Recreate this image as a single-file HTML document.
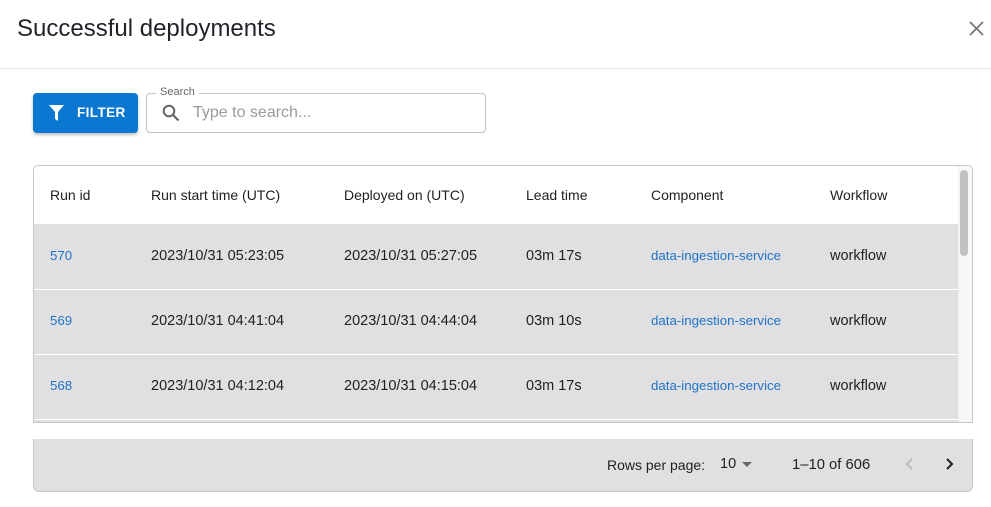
<!DOCTYPE html>
<html><head><style>
*{box-sizing:border-box;margin:0;padding:0}
body{width:991px;height:507px;background:#fff;font-family:"Liberation Sans",Arial,sans-serif;position:relative;overflow:hidden;color:#212121}
.a{position:absolute}
.t{font-size:14px;white-space:nowrap}
.d{font-size:14.5px}
.lnk{color:#1f73c9;font-size:13.3px}
</style></head><body>
<div class="a" style="left:17px;top:15px;font-size:24px;color:#1f2329">Successful deployments</div>
<svg class="a" style="left:968px;top:20px" width="17" height="17" viewBox="0 0 17 17"><path d="M2 2L15 15M15 2L2 15" stroke="#777" stroke-width="1.8"/></svg>
<div class="a" style="left:0;top:68px;width:991px;height:1px;background:#e3e3e3"></div>

<div class="a" style="left:33px;top:93px;width:105px;height:40px;background:#0a77d1;border-radius:4px;box-shadow:0 2px 3px rgba(0,0,0,.25);color:#fff;font-size:13.5px;font-weight:bold;letter-spacing:.4px">
<svg class="a" style="left:16px;top:12px" width="15" height="16" viewBox="0 0 15 16"><path d="M0 0H15L9 7V16L6 14V7Z" fill="#fff"/></svg>
<span class="a" style="left:44px;top:12px">FILTER</span></div>

<div class="a" style="left:146px;top:93px;width:340px;height:40px;border:1px solid #c4c4c4;border-radius:4px"></div>
<div class="a" style="left:156px;top:86px;padding:0 4px;background:#fff;font-size:11px;color:#666">Search</div>
<svg class="a" style="left:162px;top:104px" width="18" height="18" viewBox="0 0 18 18"><circle cx="7" cy="7" r="5.3" stroke="#666" stroke-width="2" fill="none"/><path d="M11 11L16.5 16.5" stroke="#666" stroke-width="2.2"/></svg>
<div class="a" style="left:193px;top:104px;font-size:16px;color:#9a9a9a">Type to search...</div>

<div class="a" style="left:33px;top:165px;width:940px;height:258px;border:1px solid #c8c8c8;border-radius:5px 5px 0 0;overflow:hidden;background:#fff">
 <div class="a" style="left:0;top:58px;width:924px;height:200px;background:#e0e0e2"></div>
 <div class="a" style="left:0;top:123px;width:924px;height:1px;background:#fff"></div>
 <div class="a" style="left:0;top:188px;width:924px;height:1px;background:#fff"></div>
 <div class="a" style="left:0;top:253px;width:924px;height:1px;background:#fff"></div>
 <div class="a" style="left:924px;top:0;width:15px;height:258px;background:#f8f8f8;border-left:1px solid #eee"></div>
 <div class="a" style="left:926px;top:4px;width:8px;height:86px;background:#c2c2c2;border-radius:4px"></div>
</div>
<div class="t a" style="left:50px;top:187px">Run id</div>
<div class="t a" style="left:151px;top:187px">Run start time (UTC)</div>
<div class="t a" style="left:344px;top:187px">Deployed on (UTC)</div>
<div class="t a" style="left:526px;top:187px">Lead time</div>
<div class="t a" style="left:651px;top:187px">Component</div>
<div class="t a" style="left:830px;top:187px">Workflow</div>

<div class="t a lnk" style="left:50px;top:248px">570</div>
<div class="t a d" style="left:151px;top:248px">2023/10/31 05:23:05</div>
<div class="t a d" style="left:344px;top:248px">2023/10/31 05:27:05</div>
<div class="t a d" style="left:526px;top:248px">03m 17s</div>
<div class="t a lnk" style="left:651px;top:248px">data-ingestion-service</div>
<div class="t a d" style="left:830px;top:248px">workflow</div>

<div class="t a lnk" style="left:50px;top:313px">569</div>
<div class="t a d" style="left:151px;top:313px">2023/10/31 04:41:04</div>
<div class="t a d" style="left:344px;top:313px">2023/10/31 04:44:04</div>
<div class="t a d" style="left:526px;top:313px">03m 10s</div>
<div class="t a lnk" style="left:651px;top:313px">data-ingestion-service</div>
<div class="t a d" style="left:830px;top:313px">workflow</div>

<div class="t a lnk" style="left:50px;top:378px">568</div>
<div class="t a d" style="left:151px;top:378px">2023/10/31 04:12:04</div>
<div class="t a d" style="left:344px;top:378px">2023/10/31 04:15:04</div>
<div class="t a d" style="left:526px;top:378px">03m 17s</div>
<div class="t a lnk" style="left:651px;top:378px">data-ingestion-service</div>
<div class="t a d" style="left:830px;top:378px">workflow</div>

<div class="a" style="left:33px;top:439px;width:940px;height:53px;background:#e0e0e2;border:1px solid #c8c8c8;border-top:none;border-radius:0 0 6px 6px"></div>
<div class="t a" style="left:607px;top:457px;font-size:14px">Rows per page:</div>
<div class="t a" style="left:720px;top:456px;font-size:14.5px">10</div>
<svg class="a" style="left:742px;top:462px" width="12" height="6"><path d="M0 0H10L5 5Z" fill="#666"/></svg>
<div class="t a" style="left:792px;top:457px;font-size:14.8px">1–10 of 606</div>
<svg class="a" style="left:904px;top:457px" width="12" height="14"><path d="M8 2L3 7L8 12" stroke="#bbb" stroke-width="2" fill="none"/></svg>
<svg class="a" style="left:944px;top:457px" width="12" height="14"><path d="M3 2L8 7L3 12" stroke="#222" stroke-width="2" fill="none"/></svg>
</body></html>
